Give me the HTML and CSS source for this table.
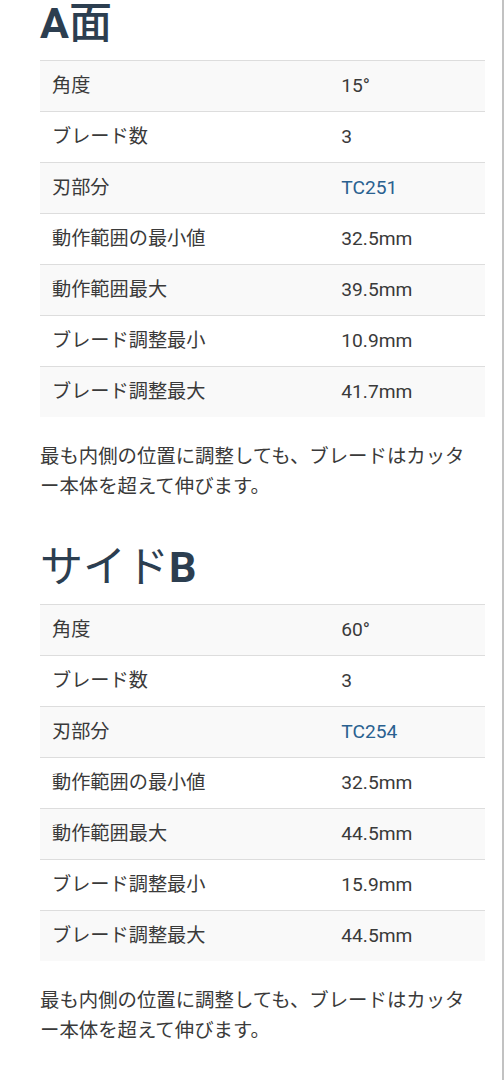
FILE: index.html
```html
<!DOCTYPE html>
<html lang="ja">
<head>
<meta charset="utf-8">
<title>ブレード仕様</title>
<link rel="stylesheet" href="styles.css">
</head>
<body>
<div class="page">
  <section class="side">
    <h2 class="side-title">A<span class="jp jp-medium">面</span></h2>
    <table class="spec">
      <tbody>
        <tr><td>角度</td><td>15°</td></tr>
        <tr><td>ブレード数</td><td>3</td></tr>
        <tr><td>刃部分</td><td><a href="#" class="part">TC251</a></td></tr>
        <tr><td>動作範囲の最小値</td><td>32.5mm</td></tr>
        <tr><td>動作範囲最大</td><td>39.5mm</td></tr>
        <tr><td>ブレード調整最小</td><td>10.9mm</td></tr>
        <tr><td>ブレード調整最大</td><td>41.7mm</td></tr>
      </tbody>
    </table>
    <p class="note">最も内側の位置に調整しても、ブレードはカッター本体を超えて伸びます。</p>
  </section>
  <section class="side">
    <h2 class="side-title"><span class="jp">サイド</span>B</h2>
    <table class="spec">
      <tbody>
        <tr><td>角度</td><td>60°</td></tr>
        <tr><td>ブレード数</td><td>3</td></tr>
        <tr><td>刃部分</td><td><a href="#" class="part">TC254</a></td></tr>
        <tr><td>動作範囲の最小値</td><td>32.5mm</td></tr>
        <tr><td>動作範囲最大</td><td>44.5mm</td></tr>
        <tr><td>ブレード調整最小</td><td>15.9mm</td></tr>
        <tr><td>ブレード調整最大</td><td>44.5mm</td></tr>
      </tbody>
    </table>
    <p class="note">最も内側の位置に調整しても、ブレードはカッター本体を超えて伸びます。</p>
  </section>
</div>
</body>
</html>
```

FILE: styles.css
```css
html, body {
  margin: 0;
  padding: 0;
  background: #ffffff;
}

body {
  font-family: Roboto, "Noto Sans CJK JP", sans-serif;
  color: #3a3a3a;
  font-size: 19.2px;
}

.page {
  box-sizing: border-box;
  width: 504px;
  min-height: 1080px;
  padding: 0 17px 0 40px;
  border-right: 2px solid #c2c2c2;
}

.side-title {
  margin: 0 0 14px;
  font-size: 43px;
  line-height: 46px;
  font-weight: 700;
  color: #2c3e50;
}

.side + .side .side-title {
  margin-top: 42px;
}

.side-title .jp {
  font-weight: 400;
}

.side-title .jp-medium {
  font-weight: 500;
}

.spec {
  width: 100%;
  border-collapse: collapse;
  border-spacing: 0;
}

.spec td {
  border-top: 1px solid #dddddd;
  padding: 11px 12px;
  line-height: 28px;
  vertical-align: top;
  text-align: left;
}

.spec td:first-child {
  width: 65%;
}

.spec tr:nth-child(odd) td {
  background: #f9f9f9;
}

.part {
  color: #2a6190;
  text-decoration: none;
}

.note {
  margin: 25px 0 0;
  padding-right: 18px;
  font-size: 19.4px;
  line-height: 30px;
  line-break: loose;
}
```
